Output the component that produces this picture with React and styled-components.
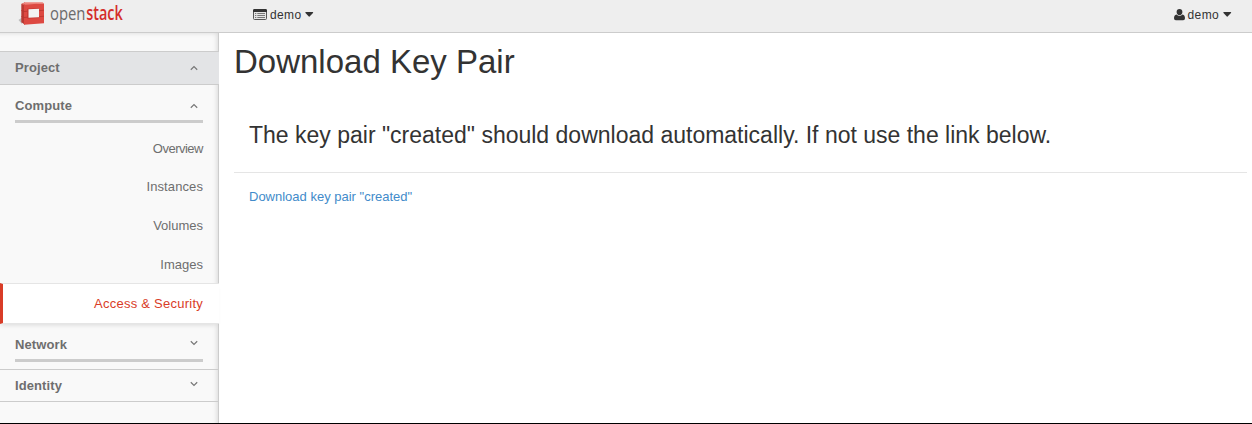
import React from "react";
import styled, { createGlobalStyle } from "styled-components";

const GlobalStyle = createGlobalStyle`
  * { box-sizing: border-box; }
  body {
    margin: 0;
    background: #fff;
    color: #333;
    font: 13px/18px "Liberation Sans", Arial, sans-serif;
  }
`;

const Page = styled.div`
  display: flex;
  flex-direction: column;
  height: 424px;
  overflow: hidden;
  border-bottom: 1px solid #000;
`;

const TopBar = styled.header`
  display: flex;
  flex: none;
  align-items: flex-start;
  height: 33px;
  padding: 0 20px 0 19px;
  background: #eee;
  border-bottom: 1px solid #ccc;
`;

const Brand = styled.svg`
  flex: none;
  width: 234px;
  height: 32px;
  display: block;
  overflow: visible;
  font-family: "Open Sans", sans-serif;
  font-size: 19px;
`;

const Menu = styled.div`
  display: flex;
  align-items: center;
  height: 18px;
  margin-top: 6px;
  font-size: 12px;
  letter-spacing: 0.35px;
  margin-left: ${(p) => (p.$end ? "auto" : "0")};
  svg { display: block; flex: none; }
`;

const MenuLabel = styled.span`
  margin: 0 4px 0 3px;
`;

const Body = styled.div`
  display: flex;
  flex: 1;
  min-height: 0;
`;

const Sidebar = styled.nav`
  flex: none;
  width: 219px;
  padding-top: 18px;
  background: #f9f9f9;
  border-right: 1px solid #ccc;
  box-shadow: inset -3px 2px 5px -2px rgba(0, 0, 0, 0.13);
`;

const Dashboard = styled.div`
  display: flex;
  align-items: center;
  justify-content: space-between;
  height: ${(p) => p.$height}px;
  padding: 0 20px 0 15px;
  color: #6e6e6e;
  font-weight: bold;
  letter-spacing: 0.1px;
  background: ${(p) => (p.$open ? "#e3e4e6" : "transparent")};
  border-top: ${(p) => (p.$open ? "1px solid #ccc" : "0")};
  border-bottom: 1px solid #ccc;
  margin-right: ${(p) => (p.$open ? "-1px" : "0")};
  padding-right: ${(p) => (p.$open ? "21px" : "20px")};
`;

const Group = styled.div`
  display: flex;
  justify-content: space-between;
  height: 38px;
  margin: 0 15px;
  padding: 12px 5px 0 0;
  color: #6e6e6e;
  font-weight: bold;
  letter-spacing: 0.1px;
  border-bottom: 3px solid #ccc;
`;

const PanelList = styled.div`
  padding-top: 7px;
`;

const Panel = styled.div`
  height: ${(p) => p.$height || 39}px;
  padding: 10px 15px 0;
  text-align: right;
  color: #6e6e6e;
  letter-spacing: ${(p) => p.$tracking || 0}px;
`;

const ActivePanel = styled(Panel)`
  position: relative;
  height: 41px;
  margin: -2px -1px 0 0;
  padding: 11px 16px 0 0;
  color: #d93c27;
  background: #fff;
  border: solid #e5e5e5;
  border-width: 1px 0;
  border-left: 3px solid #d93c27;
  box-shadow: -1px 3px 5px -2px rgba(0, 0, 0, 0.13);
`;

const GroupEnd = styled.div`
  height: 8px;
  border-bottom: 1px solid #ccc;
`;

const Angle = styled.svg`
  display: block;
  flex: none;
  width: 8px;
  height: 6px;
  margin-top: ${(p) => p.$top || 0}px;
  transform: ${(p) => (p.$down ? "rotate(180deg)" : "none")};
  fill: none;
  stroke: #777;
  stroke-width: 1.2;
`;

const Content = styled.main`
  flex: 1;
  padding: 0 5px 0 15px;
`;

const Title = styled.h1`
  margin: 9px 0 0;
  font-size: 33px;
  line-height: 39px;
  font-weight: normal;
`;

const Notice = styled.div`
  height: 92px;
  padding: 41px 15px 0;
  border-bottom: 1px solid #e5e5e5;
`;

const NoticeText = styled.h3`
  margin: 0;
  font-size: 23px;
  line-height: 26px;
  font-weight: normal;
`;

const KeyLink = styled.a`
  display: block;
  padding: 15px 15px 0;
  color: #428bca;
`;

const Chevron = (props) => (
  <Angle viewBox="0 0 8 6" {...props}>
    <path d="M.8 4.7 4 1.6 7.2 4.7" />
  </Angle>
);

const Caret = () => (
  <svg width="9" height="6" viewBox="0 0 9 6">
    <path d="M.8 0H7.7Q8.5.2 8 1L4.6 4.6Q4.2 4.9 3.8 4.6L.5 1Q0 .2.8 0Z" fill="#333" />
  </svg>
);

const ListIcon = () => (
  <svg width="14" height="12" viewBox="0 0 14 12">
    <rect x=".5" y=".5" width="13" height="10" rx="1" fill="#e4e4e4" stroke="#555" />
    <path d="M1 0H13L14 1V3H0V1Z" fill="#333" />
    <path d="M2 4.5H3.3M4.3 4.5H12M2 6.5H3.3M4.3 6.5H12M2 8.5H3.3M4.3 8.5H12" stroke="#777" />
  </svg>
);

const UserIcon = () => (
  <svg width="11" height="12" viewBox="0 0 11 12">
    <path
      d="M5.5 0A3 3 0 0 1 8.4 3C8.4 4.9 7.2 6.3 5.5 6.3S2.6 4.9 2.6 3A3 3 0 0 1 5.5 0ZM2.5 5.6Q3.8 7 5.5 7T8.5 5.6C10.3 5.8 11 7.5 11 9.3Q11 11.2 9.2 11.2H1.8Q0 11.2 0 9.3C0 7.5.7 5.8 2.5 5.6Z"
      fill="#333"
    />
  </svg>
);

const Logo = () => (
  <Brand viewBox="0 0 234 32">
    <path d="M-.5 20 3 17.5V24Z" fill="#bbb" />
    <path d="M2.3 4 6 2.3V24.7L2.3 22.3Z" fill="#b93a34" />
    <path d="M2.3 4 6 2.2 23.5 2.3 25 3.5 5.5 4.8Z" fill="#ee837b" />
    <path d="M5 4.5 25 3.4V23.2L5 24.8Z" fill="#dd4942" />
    <path d="M8.4 8.8 20 8.2V18L8.4 18.6Z" fill="#c0322d" />
    <path d="M9.5 9.2 20 8.7V17.3L9.5 17.8Z" fill="#f3f3f3" />
    <path d="M2.3 10.5 5 11.5 8.5 11.2M2.3 16.5 5 17.5 8.5 17.2M20 10.7 25 10.2M20 16.7 25 16.2" fill="none" stroke="#b7352f" strokeWidth=".8" />
    <text x="31" y="19.5" textLength="35.5" lengthAdjust="spacingAndGlyphs" fill="#6b6b6b">
      open
    </text>
    <text x="67.2" y="19.5" textLength="36.5" lengthAdjust="spacingAndGlyphs" fill="#d42d2a" fontWeight="600">
      stack
    </text>
  </Brand>
);

export default function App() {
  return (
    <Page>
      <GlobalStyle />
      <TopBar>
        <Logo />
        <Menu>
          <ListIcon />
          <MenuLabel>demo</MenuLabel>
          <Caret />
        </Menu>
        <Menu $end>
          <UserIcon />
          <MenuLabel>demo</MenuLabel>
          <Caret />
        </Menu>
      </TopBar>
      <Body>
        <Sidebar>
          <Dashboard $open $height={34}>
            Project
            <Chevron />
          </Dashboard>
          <Group>
            Compute
            <Chevron $top={6} />
          </Group>
          <PanelList>
            <Panel $height={38} $tracking={-0.5}>Overview</Panel>
            <Panel $tracking={0.1}>Instances</Panel>
            <Panel>Volumes</Panel>
            <Panel>Images</Panel>
            <ActivePanel $tracking={0.25}>Access &amp; Security</ActivePanel>
          </PanelList>
          <Group>
            Network
            <Chevron $down $top={4} />
          </Group>
          <GroupEnd />
          <Dashboard $height={32}>
            Identity
            <Chevron $down $top={-3} />
          </Dashboard>
        </Sidebar>
        <Content>
          <Title>Download Key Pair</Title>
          <Notice>
            <NoticeText>The key pair "created" should download automatically. If not use the link below.</NoticeText>
          </Notice>
          <KeyLink>Download key pair "created"</KeyLink>
        </Content>
      </Body>
    </Page>
  );
}
